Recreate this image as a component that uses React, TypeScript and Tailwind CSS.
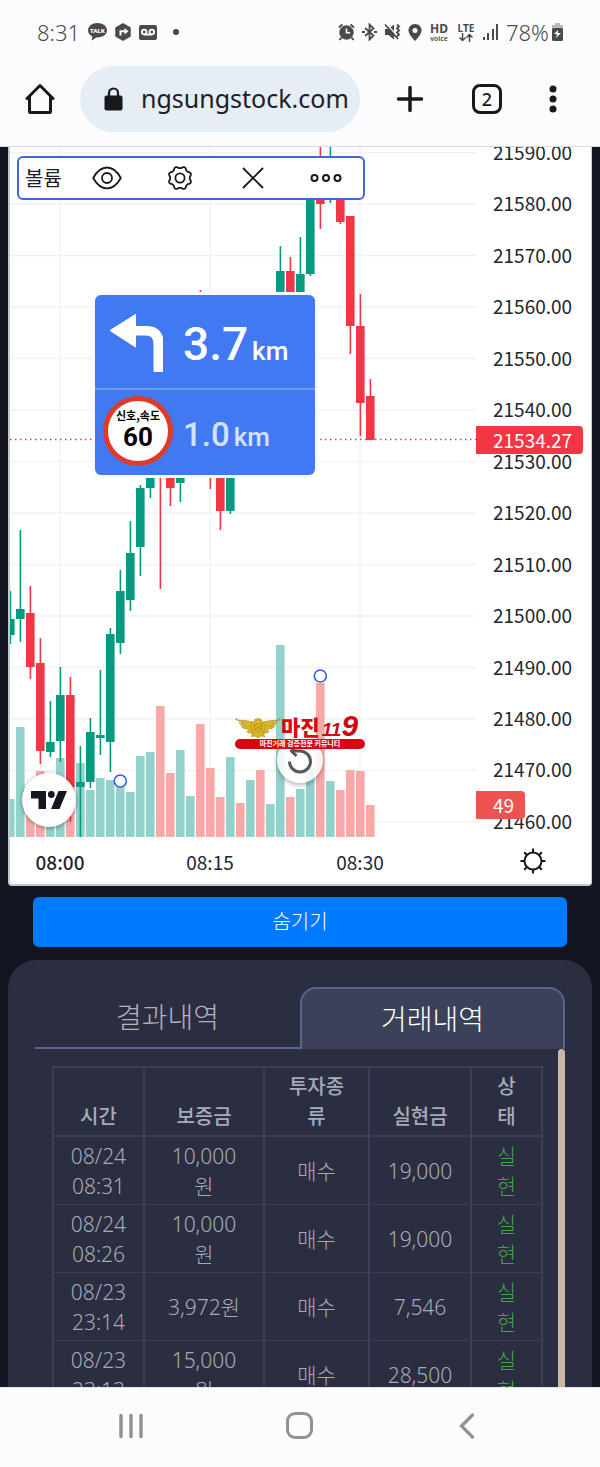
import type { ReactNode } from "react";

type Side = "up" | "down";

interface Bar {
  x: number;
  side: Side;
  high: number;
  top: number;
  bottom: number;
  low: number;
}

interface Volume {
  x: number;
  side: Side;
  top: number;
}

interface Trade {
  time: string;
  deposit: string;
  kind: string;
  profit: string;
  status: string;
}

const candleColor = { up: "#089981", down: "#f23645" };
const volumeColor = { up: "#92d2cc", down: "#f7a9a7" };

const bars: Bar[] = [
  { x: 10, side: "up", high: 591, top: 619, bottom: 635, low: 644 },
  { x: 20, side: "up", high: 530, top: 609, bottom: 619, low: 642 },
  { x: 30, side: "down", high: 586, top: 613, bottom: 667, low: 679 },
  { x: 40, side: "down", high: 638, top: 663, bottom: 751, low: 764 },
  { x: 50, side: "up", high: 701, top: 742, bottom: 752, low: 757 },
  { x: 60, side: "up", high: 667, top: 695, bottom: 741, low: 762 },
  { x: 70, side: "down", high: 677, top: 695, bottom: 787, low: 822 },
  { x: 80, side: "up", high: 746, top: 782, bottom: 787, low: 837 },
  { x: 90, side: "up", high: 718, top: 732, bottom: 782, low: 788 },
  { x: 100, side: "up", high: 670, top: 735, bottom: 738, low: 755 },
  { x: 110, side: "up", high: 628, top: 634, bottom: 742, low: 772 },
  { x: 120, side: "up", high: 570, top: 591, bottom: 643, low: 654 },
  { x: 130, side: "up", high: 521, top: 553, bottom: 600, low: 611 },
  { x: 140, side: "up", high: 485, top: 488, bottom: 547, low: 576 },
  { x: 150, side: "up", high: 450, top: 460, bottom: 488, low: 498 },
  { x: 160, side: "down", high: 440, top: 450, bottom: 470, low: 589 },
  { x: 170, side: "down", high: 440, top: 460, bottom: 488, low: 506 },
  { x: 180, side: "up", high: 420, top: 440, bottom: 483, low: 502 },
  { x: 190, side: "up", high: 340, top: 360, bottom: 440, low: 450 },
  { x: 200, side: "down", high: 290, top: 360, bottom: 420, low: 440 },
  { x: 210, side: "down", high: 400, top: 420, bottom: 460, low: 489 },
  { x: 220, side: "down", high: 440, top: 460, bottom: 511, low: 530 },
  { x: 230, side: "up", high: 400, top: 420, bottom: 511, low: 514 },
  { x: 280, side: "up", high: 246, top: 271, bottom: 320, low: 330 },
  { x: 290, side: "down", high: 257, top: 271, bottom: 310, low: 320 },
  { x: 300, side: "up", high: 237, top: 274, bottom: 310, low: 320 },
  { x: 310, side: "up", high: 170, top: 180, bottom: 274, low: 276 },
  { x: 320, side: "down", high: 140, top: 180, bottom: 204, low: 229 },
  { x: 330, side: "up", high: 140, top: 170, bottom: 190, low: 203 },
  { x: 340, side: "down", high: 165, top: 175, bottom: 222, low: 224 },
  { x: 350, side: "down", high: 216, top: 216, bottom: 326, low: 354 },
  { x: 360, side: "down", high: 294, top: 326, bottom: 403, low: 436 },
  { x: 370, side: "down", high: 379, top: 396, bottom: 440, low: 440 },
];

const volumes: Volume[] = [
  { x: 10, side: "up", top: 799 },
  { x: 20, side: "up", top: 727 },
  { x: 30, side: "down", top: 792 },
  { x: 40, side: "down", top: 771 },
  { x: 50, side: "up", top: 790 },
  { x: 60, side: "up", top: 758 },
  { x: 70, side: "down", top: 780 },
  { x: 80, side: "up", top: 763 },
  { x: 90, side: "up", top: 790 },
  { x: 100, side: "up", top: 778 },
  { x: 110, side: "up", top: 780 },
  { x: 120, side: "up", top: 786 },
  { x: 130, side: "up", top: 792 },
  { x: 140, side: "up", top: 756 },
  { x: 150, side: "up", top: 752 },
  { x: 160, side: "down", top: 706 },
  { x: 170, side: "down", top: 773 },
  { x: 180, side: "up", top: 750 },
  { x: 190, side: "up", top: 796 },
  { x: 200, side: "down", top: 724 },
  { x: 210, side: "down", top: 768 },
  { x: 220, side: "down", top: 797 },
  { x: 230, side: "up", top: 757 },
  { x: 240, side: "down", top: 803 },
  { x: 250, side: "up", top: 780 },
  { x: 260, side: "down", top: 770 },
  { x: 270, side: "up", top: 804 },
  { x: 280, side: "up", top: 645 },
  { x: 290, side: "down", top: 797 },
  { x: 300, side: "up", top: 789 },
  { x: 310, side: "up", top: 767 },
  { x: 320, side: "down", top: 683 },
  { x: 330, side: "up", top: 781 },
  { x: 340, side: "down", top: 790 },
  { x: 350, side: "down", top: 770 },
  { x: 360, side: "down", top: 771 },
  { x: 370, side: "down", top: 805 },
];

const prices = Array.from({ length: 14 }, (_, i) => `${21590 - i * 10}.00`);

const trades: Trade[] = [
  { time: "08/24 08:31", deposit: "10,000원", kind: "매수", profit: "19,000", status: "실현" },
  { time: "08/24 08:26", deposit: "10,000원", kind: "매수", profit: "19,000", status: "실현" },
  { time: "08/23 23:14", deposit: "3,972원", kind: "매수", profit: "7,546", status: "실현" },
  { time: "08/23 23:13", deposit: "15,000원", kind: "매수", profit: "28,500", status: "실현" },
];

// eight soft teeth around the ring
const gearPath =
  Array.from({ length: 96 }, (_, i) => {
    const a = (i / 96) * Math.PI * 2;
    const wave = Math.max(-0.7, Math.cos(8 * (a - Math.PI / 8)));
    const r = 10.6 + wave * 1.1;
    return `${i ? "L" : "M"}${(13 + r * Math.cos(a)).toFixed(2)} ${(13 + r * Math.sin(a)).toFixed(2)}`;
  }).join("") + "Z";

function StatusBar() {
  return (
    <div className="flex h-[66px] items-center justify-between pr-[36px] pb-0.5 pl-[37px] text-[22px] font-light text-[#4a4a4c]">
      <div className="flex items-center gap-2">
        <span>8:31</span>
        <svg width="19" height="18" viewBox="0 0 19 18" fill="#4a4a4c">
          <path d="M9.500 0C4.200 0 0 3.200 0 7.300c0 2.700 1.800 4.900 4.400 6.200L3.600 17.600l4.700-3.200c6 .5 10.700-2.600 10.700-7.100C19 3.200 14.800 0 9.500 0z" />
          <text x="9.500" y="9.500" fill="#fff" fontSize="6" fontWeight="800" textAnchor="middle">TALK</text>
        </svg>
        <svg width="16" height="18" viewBox="0 0 16 18">
          <path d="M8 1l7 4v8l-7 4-7-4V5z" fill="#4a4a4c" stroke="#4a4a4c" strokeWidth="1.500" strokeLinejoin="round" />
          <path d="M5.500 12.500V8.300h5" fill="none" stroke="#fff" strokeWidth="2" />
          <path d="M9.500 5l4 3.300-4 3.300z" fill="#fff" />
        </svg>
        <svg width="18" height="15" viewBox="0 0 18 15">
          <rect width="18" height="15" rx="2" fill="#4a4a4c" />
          <g fill="none" stroke="#fff" strokeWidth="1.800">
            <circle cx="5.200" cy="7" r="2.300" />
            <circle cx="12.800" cy="7" r="2.300" />
            <path d="M5.200 9.600h7.600" />
          </g>
        </svg>
        <span className="ml-2 size-1.5 rounded-full bg-[#4a4a4c]" />
      </div>
      <div className="flex items-center gap-[7px]">
        <svg width="17" height="18" viewBox="0 0 17 18" fill="none" stroke="#4a4a4c">
          <circle cx="8.500" cy="9.500" r="6.700" fill="#4a4a4c" />
          <path d="M1 4.500L4.500 1.500M16 4.500L12.500 1.500M3.500 14.500L1.500 17M13.500 14.500l2 2.500" strokeWidth="2" />
          <path d="M8.500 5.500v4.300h3.600" stroke="#fff" strokeWidth="1.600" />
        </svg>
        <svg width="15" height="18" viewBox="0 0 15 18" fill="none" stroke="#4a4a4c" strokeWidth="1.800">
          <path d="M3 5l8.500 7.500L7.500 16.500V1.500l4 4L3 13" />
          <path d="M0 9h3M12 9h3" strokeWidth="2" />
        </svg>
        <svg width="17" height="18" viewBox="0 0 17 18">
          <path d="M1 6h3.500L10 1.500v15L4.500 12H1z" fill="#4a4a4c" />
          <path d="M2.500 1l13.500 15" stroke="#fcfcff" strokeWidth="1.500" />
          <path d="M1 1.500l13 14.500" stroke="#4a4a4c" strokeWidth="1.800" />
          <path d="M13 1.500l2 2-2 2 2 2-2 2 2 2-2 2" fill="none" stroke="#4a4a4c" strokeWidth="1.800" />
        </svg>
        <svg width="14" height="17" viewBox="0 0 14 17">
          <path d="M7 0C3 0 .5 3 .5 6.300.5 11 7 17 7 17s6.500-6 6.500-10.700C13.500 3 11 0 7 0z" fill="#4a4a4c" />
          <circle cx="7" cy="6.500" r="2.500" fill="#fff" />
        </svg>
        <span className="flex w-5 flex-col items-center">
          <span className="text-[12px] leading-[12px] font-bold">HD</span>
          <span className="text-[7px] leading-[7px] font-semibold">voice</span>
        </span>
        <span className="flex w-5 flex-col items-center">
          <span className="text-[10px] leading-[10px] font-bold">LTE</span>
          <svg width="14" height="9" viewBox="0 0 14 9" fill="none" stroke="#4a4a4c" strokeWidth="1.500">
            <path d="M3.500 0v7M0.500 4.500l3 3 3-3M10.500 9V2M7.500 4.500l3-3 3 3" />
          </svg>
        </span>
        <svg width="16" height="18" viewBox="0 0 16 18" fill="#4a4a4c">
          <path d="M0 14h2v3H0zM4 10h2v7H4zM9 6h2v11H9zM13 1h2v16h-2z" />
        </svg>
        <span className="flex items-center">
          78%
          <svg className="ml-0.5" width="13" height="18" viewBox="0 0 13 18">
            <path d="M4 0h5v2h3v4H1V2h3z" fill="#b9b9bb" />
            <rect x="1" y="5" width="11" height="13" rx="1.500" fill="#4a4a4c" />
            <path d="M7 7l-4 4h3l-1 4 5-5H7z" fill="#fff" />
          </svg>
        </span>
      </div>
    </div>
  );
}

function AddressBar() {
  return (
    <div className="flex h-[66px] pr-2">
      <button aria-label="홈" className="flex w-20 shrink-0 items-center justify-center">
        <svg width="30" height="32" viewBox="0 0 30 32" fill="none" stroke="#17191c" strokeWidth="3" strokeLinejoin="round" strokeLinecap="round">
          <path d="M2 15.500L15 2.500l13 13M4.500 14v14.500q0 1 1 1h19q1 0 1-1V14" />
        </svg>
      </button>
      <div className="flex min-w-0 flex-1 items-center gap-[18px] rounded-full bg-[#e6edf5] pr-1 pl-6">
        <svg className="shrink-0" width="19" height="24" viewBox="0 0 19 24">
          <rect x="0.500" y="8.500" width="18" height="15" rx="2" fill="#17191c" />
          <path d="M5 9V6a4.500 4.500 0 019 0v3" fill="none" stroke="#17191c" strokeWidth="2.200" />
        </svg>
        <input
          aria-label="주소"
          defaultValue="ngsungstock.com"
          className="w-full min-w-0 bg-transparent text-[25px] text-[#1c2026] outline-none"
        />
      </div>
      <button aria-label="새 탭" className="flex w-[100px] items-center justify-center">
        <svg width="28" height="28" viewBox="0 0 28 28" stroke="#17191c" strokeWidth="3.500" strokeLinecap="round">
          <path d="M14 2.500v23M2.500 14h23" />
        </svg>
      </button>
      <button aria-label="탭 2개" className="flex w-[54px] items-center justify-center">
        <span className="flex size-[30px] items-center justify-center rounded-lg border-3 border-[#17191c] text-lg font-medium text-[#17191c]">
          2
        </span>
      </button>
      <button aria-label="메뉴" className="flex w-[78px] items-center justify-center">
        <svg width="8" height="28" viewBox="0 0 8 28" fill="#17191c">
          <circle cx="4" cy="4" r="3.500" />
          <circle cx="4" cy="14" r="3.500" />
          <circle cx="4" cy="24" r="3.500" />
        </svg>
      </button>
    </div>
  );
}

function ToolButton({ label, children }: { label: string; children: ReactNode }) {
  return (
    <button aria-label={label} className="flex w-[73px] items-center justify-center">
      {children}
    </button>
  );
}

function IndicatorToolbar() {
  return (
    <div className="absolute top-[9px] left-[7px] flex h-[44px] rounded-md border-2 border-[#3d68dc] bg-white pr-px">
      <span className="flex w-[51px] items-center pl-1.5 text-xl text-[#1c2026]">볼륨</span>
      <ToolButton label="보기">
        <svg width="30" height="24" viewBox="0 0 30 24" fill="none" stroke="#17191c" strokeWidth="1.800">
          <path d="M1.200 12C5 5 9.500 1.500 15 1.500S25 5 28.800 12C25 19 20.500 22.300 15 22.300S5 19 1.200 12z" strokeLinejoin="round" />
          <circle cx="15" cy="12" r="5" />
        </svg>
      </ToolButton>
      <ToolButton label="설정">
        <svg width="26" height="26" viewBox="0 0 26 26" fill="none" stroke="#17191c" strokeWidth="1.800">
          <path d={gearPath} strokeLinejoin="round" />
          <circle cx="13" cy="13" r="4.600" />
        </svg>
      </ToolButton>
      <ToolButton label="삭제">
        <svg width="22" height="22" viewBox="0 0 22 22" stroke="#17191c" strokeWidth="1.800">
          <path d="M1 1l20 20M21 1L1 21" />
        </svg>
      </ToolButton>
      <ToolButton label="더 보기">
        <svg width="32" height="10" viewBox="0 0 32 10" fill="none" stroke="#17191c" strokeWidth="2">
          <circle cx="4.500" cy="5" r="3" />
          <circle cx="16" cy="5" r="3" />
          <circle cx="27.500" cy="5" r="3" />
        </svg>
      </ToolButton>
    </div>
  );
}

function RouteCard() {
  return (
    <div className="absolute top-[148px] left-[85px] h-[180px] w-[220px] rounded-md bg-[#4179f2] font-['Roboto',sans-serif] font-medium text-white ring-3 ring-[#f8faff]">
      <div className="flex h-[95px] items-center gap-5 border-b-2 border-[#6e9af6] pl-3.5">
        <svg width="54" height="60" viewBox="0 0 54 60" fill="#fff">
          <path d="M1 18.500L26.500 2.500v12H38Q54 14.500 54 31V59.500H45V32Q45 23 37 23H26.500V35z" stroke="#fff" strokeLinejoin="round" />
        </svg>
        <div className="flex items-baseline gap-1 pt-1.5">
          <span className="text-[46px]">3.7</span>
          <span className="text-[26px]">km</span>
        </div>
      </div>
      <div className="flex h-[85px] items-center gap-2.5 pb-1 pl-2">
        <div className="flex size-[70px] flex-col items-center justify-center rounded-full border-5 border-[#e03a2c] bg-white pb-1 text-black">
          <span className="font-['Noto_Sans_CJK_KR',sans-serif] text-[11px] leading-4 font-bold">신호,속도</span>
          <span className="text-[26px] leading-7 font-bold">60</span>
        </div>
        <div className="flex items-baseline gap-1 pt-2 text-[#d5e2fc]">
          <span className="text-[33px]">1.0</span>
          <span className="text-[26px]">km</span>
        </div>
      </div>
    </div>
  );
}

function Watermark() {
  return (
    <div className="absolute top-[570px] left-[225px] w-[130px] font-['Noto_Sans_CJK_KR',sans-serif]">
      <div className="flex h-[22px] items-center">
        <svg className="shrink-0" width="46" height="22" viewBox="0 0 46 22" fill="#dcb526" stroke="#a8861a" strokeWidth="0.600">
          <path d="M1 3q10 0 17 2l2 6-2 6-6-2q2-2 1-3-5 0-7-3 3 1 5 0-6-1-7-3 3 1 5 0-6-1-8-5z" />
          <path d="M45 3q-10 0-17 2l-2 6 2 6 6-2q-2-2-1-3 5 0 7-3-3 1-5 0 6-1 7-3-3 1-5 0 6-1 8-5z" />
          <path d="M23 1.500q4 0 4.500 4l3 3-1.500 6-2 1 3 4-4-.5-3 2-3-2-4 .5 3-4-2-1-1.500-6 3-3q.5-4 4.500-4z" />
          <path d="M19 8l4-2 4 2-1 5-3 2-3-2zM19 8l8 5M27 8l-8 5" fill="none" />
          <path d="M23 3l2 2-2 1.500L21 5z" fill="#f4dc52" />
        </svg>
        <span className="-mt-1 text-[21px] leading-5 font-black text-[#d80a10]">마진</span>
        <span className="ml-0.5 flex items-baseline font-['Liberation_Sans',sans-serif] font-bold text-[#c9090f] italic">
          <span className="text-[19px] leading-5">11</span>
          <span className="text-[30px] leading-5">9</span>
        </span>
      </div>
      <div className="h-[10px] rounded-full bg-[#d9080f] text-center text-[7px] leading-[9px] font-bold whitespace-nowrap text-white">
        마진거래 검증전문 커뮤니티
      </div>
    </div>
  );
}

function Plot() {
  return (
    <div className="relative min-w-0 flex-1">
      <svg className="block h-[690px] w-full" viewBox="10 147 466 690" preserveAspectRatio="xMinYMin slice">
        <g stroke="#f1f2f4" strokeWidth="1.500">
          {prices.map((price, i) => (
            <path key={price} d={`M10 ${152.5 + i * 51.5}H1000`} />
          ))}
          <path d="M60 147V837M210 147V837M360 147V837" />
        </g>
        {volumes.map((v) => (
          <rect key={v.x} x={v.x - 4} y={v.top} width="8.600" height={837 - v.top} fill={volumeColor[v.side]} />
        ))}
        {bars.map((b) => (
          <g key={b.x} fill={candleColor[b.side]}>
            <rect x={b.x - 0.4} y={b.high} width="1.600" height={b.low - b.high} />
            <rect x={b.x - 4} y={b.top} width="8.600" height={b.bottom - b.top} />
          </g>
        ))}
        <path d="M10 439.500H1000" stroke="#d0455a" strokeWidth="1.500" strokeDasharray="1.500 3.500" />
        <g fill="#fff" stroke="#3560d4" strokeWidth="1.600">
          <circle cx="120.300" cy="781" r="6" />
          <circle cx="320.300" cy="676" r="6" />
        </g>
      </svg>

      <IndicatorToolbar />
      <RouteCard />

      <a
        href="#tradingview"
        aria-label="TradingView"
        className="absolute top-[626px] left-[12px] flex size-[54px] items-center justify-center rounded-full bg-white shadow-[0_1px_4px_rgba(0,0,0,0.4)]"
      >
        <svg width="36" height="18" viewBox="0 0 36 18" fill="#131722">
          <path d="M0 0h15v18H7.500V7.500H0zM27.500 0H36l-7.500 18H20z" />
          <circle cx="20.300" cy="3.500" r="3.400" />
        </svg>
      </a>

      <button
        aria-label="차트 초기화"
        className="absolute top-[590px] left-[267px] flex size-[46px] items-center justify-center rounded-full bg-white/85 shadow-[0_2px_5px_rgba(0,0,0,0.3)]"
      >
        <svg width="26" height="28" viewBox="0 0 26 28" fill="none" stroke="#555962" strokeWidth="3">
          <path d="M2.500 15.500A10.500 10.500 0 1013 5H5" />
          <path d="M9.500 0L4.500 5l5 5" />
        </svg>
      </button>
      <Watermark />
    </div>
  );
}

function PriceAxis() {
  return (
    <div className="relative h-[690px] w-[115px] shrink-0">
      <div className="-mt-[7px] flex h-[693px] flex-col justify-between pl-[17px]">
        {prices.map((price) => (
          <span key={price} className="leading-6">{price}</span>
        ))}
      </div>
      <div className="absolute top-[279px] left-0 flex h-[28px] w-[107px] items-center rounded-r bg-[#f23645] pl-[17px] text-white">
        21534.27
      </div>
      <div className="absolute top-[644px] left-0 flex h-[28px] w-[49px] items-center rounded-r bg-[#ef5350] pl-[17px] text-white">
        49
      </div>
    </div>
  );
}

function Chart() {
  return (
    <section className="mx-2 overflow-hidden rounded-b border-r border-b-2 border-l-2 border-[#c5c9ce] bg-white font-['Noto_Sans_CJK_KR',sans-serif] text-[19px] text-[#23262e]">
      <div className="flex">
        <Plot />
        <PriceAxis />
      </div>
      <div className="flex h-[47px] items-center justify-between pr-[45px]">
        <div className="flex gap-[50px] pt-1 text-center">
          <span className="w-[100px] font-medium">08:00</span>
          <span className="w-[100px]">08:15</span>
          <span className="w-[100px]">08:30</span>
        </div>
        <button aria-label="축 설정">
          <svg width="26" height="26" viewBox="0 0 26 26" fill="none" stroke="#17191c" strokeWidth="2">
            <circle cx="13" cy="13" r="8.500" />
            <path d="M13 0.500v4M13 21.500v4M0.500 13h4M21.500 13h4M4.200 4.200l2.500 2.500M19.300 19.300l2.500 2.500M4.200 21.800l2.500-2.500M19.300 6.700l2.500-2.500" />
          </svg>
        </button>
      </div>
    </section>
  );
}

function TradeTable() {
  return (
    <table className="w-full table-fixed border-collapse border-2 border-[#3a3f57] text-center text-[21px] leading-[30px] font-light text-[#a7abb9]">
      <colgroup>
        <col className="w-[91px]" />
        <col className="w-[120px]" />
        <col className="w-[105px]" />
        <col className="w-[102px]" />
        <col className="w-[71px]" />
      </colgroup>
      <thead className="border-b-2 border-[#3a3f57] text-xl leading-[30px]">
        <tr>
          {["시간", "보증금", "투자종류", "실현금", "상태"].map((title) => (
            <th key={title} className="border-x-2 border-[#3a3f57] px-[17px] pt-1 pb-[3px] align-bottom font-medium break-all">
              {title}
            </th>
          ))}
        </tr>
      </thead>
      <tbody>
        {trades.map((trade) => (
          <tr key={trade.time} className="border-b border-[#3a3f57]">
            <td className="border-x-2 border-[#3a3f57] px-[15px] pt-1 pb-[3px]">{trade.time}</td>
            <td className="border-x-2 border-[#3a3f57] px-[18px] pt-1 pb-[3px]">{trade.deposit}</td>
            <td className="border-x-2 border-[#3a3f57] px-[18px] pt-1 pb-[3px]">{trade.kind}</td>
            <td className="border-x-2 border-[#3a3f57] px-[15px] pt-1 pb-[3px]">{trade.profit}</td>
            <td className="border-x-2 border-[#3a3f57] px-[18px] pt-1 pb-[3px] text-[#43a547]">{trade.status}</td>
          </tr>
        ))}
      </tbody>
    </table>
  );
}

function HistoryPanel() {
  return (
    <section className="mx-2 mt-[13px] rounded-t-[28px] bg-[#2b2e41] px-[27px] pt-[27px]">
      <div role="tablist" className="flex h-[62px] text-[28px] font-light">
        <button role="tab" aria-selected={false} className="w-1/2 border-b-2 border-[#5c648c] text-[#b3b3b8]">
          결과내역
        </button>
        <button
          role="tab"
          aria-selected
          className="w-1/2 rounded-t-2xl border-x-2 border-t-2 border-[#5c648c] bg-[#3b4158] text-white"
        >
          거래내역
        </button>
      </div>
      <div className="flex">
        <div className="min-w-0 flex-1 px-[17px] pt-[17px]">
          <TradeTable />
        </div>
        <div className="w-[7px] rounded-full bg-[#c9b9a4]" />
      </div>
    </section>
  );
}

function NavBar() {
  return (
    <nav className="flex h-20 shrink-0 justify-center border-t border-[#e4e4ec] bg-[#fcfcff] pr-0.5 pb-1">
      <button aria-label="최근 앱" className="flex w-[168px] items-center justify-center">
        <svg width="26" height="26" viewBox="0 0 26 26" stroke="#929294" strokeWidth="3.500" strokeLinecap="round">
          <path d="M3 2.500v21M13 2.500v21M23 2.500v21" />
        </svg>
      </button>
      <button aria-label="홈 화면" className="flex w-[168px] items-center justify-center">
        <span className="size-[27px] rounded-[9px] border-3 border-[#929294]" />
      </button>
      <button aria-label="뒤로" className="flex w-[168px] items-center justify-center">
        <svg width="16" height="26" viewBox="0 0 16 26" fill="none" stroke="#929294" strokeWidth="3.200" strokeLinecap="round">
          <path d="M13.500 2L2.500 13l11 11" />
        </svg>
      </button>
    </nav>
  );
}

export default function App() {
  return (
    <div className="flex h-screen flex-col bg-[#131520] font-['Noto_Sans','Noto_Sans_CJK_KR',sans-serif]">
      <header className="shrink-0 border-b border-[#d5dae0] bg-[#fcfcff] pb-[14px]">
        <StatusBar />
        <AddressBar />
      </header>
      <main className="min-h-0 flex-1 overflow-hidden">
        <Chart />
        <div className="mt-[11px] px-[33px]">
          <button className="h-[50px] w-full rounded-md bg-[#007bff] text-xl font-light text-white">숨기기</button>
        </div>
        <HistoryPanel />
      </main>
      <NavBar />
    </div>
  );
}
